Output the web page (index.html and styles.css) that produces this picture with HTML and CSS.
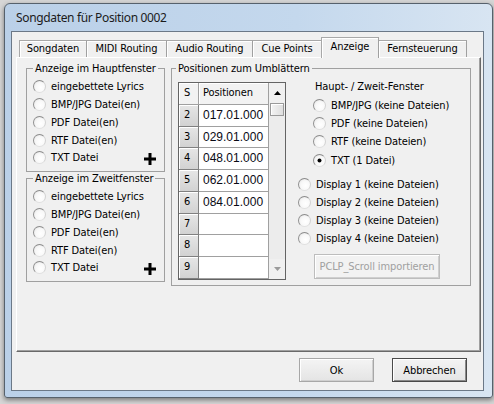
FILE: index.html
```html
<!DOCTYPE html>
<html>
<head>
<meta charset="utf-8">
<link rel="stylesheet" href="styles.css">
</head>
<body>
<div class="window">
  <div class="titlebar">Songdaten für Position 0002</div>
  <div class="client">
    <div class="tabrow">
      <div class="tab first w1">Songdaten</div>
      <div class="tab w2">MIDI Routing</div>
      <div class="tab w3">Audio Routing</div>
      <div class="tab w4">Cue Points</div>
      <div class="tab active w5">Anzeige</div>
      <div class="tab w6">Fernsteuerung</div>
    </div>
    <div class="panel">
      <div class="leftcol">
        <fieldset class="group small">
          <legend>Anzeige im Hauptfenster</legend>
          <div class="radio"><span class="r"></span>eingebettete Lyrics</div>
          <div class="radio"><span class="r"></span>BMP/JPG Datei(en)</div>
          <div class="radio"><span class="r"></span>PDF Datei(en)</div>
          <div class="radio"><span class="r"></span>RTF Datei(en)</div>
          <div class="radio"><span class="r"></span>TXT Datei<svg class="plus" width="12" height="12" viewBox="0 0 12 12"><path d="M4.5 0h3v4.5h4.5v3h-4.5v4.5h-3v-4.5h-4.5v-3h4.5z"/></svg></div>
        </fieldset>
        <fieldset class="group small second">
          <legend>Anzeige im Zweitfenster</legend>
          <div class="radio"><span class="r"></span>eingebettete Lyrics</div>
          <div class="radio"><span class="r"></span>BMP/JPG Datei(en)</div>
          <div class="radio"><span class="r"></span>PDF Datei(en)</div>
          <div class="radio"><span class="r"></span>RTF Datei(en)</div>
          <div class="radio"><span class="r"></span>TXT Datei<svg class="plus" width="12" height="12" viewBox="0 0 12 12"><path d="M4.5 0h3v4.5h4.5v3h-4.5v4.5h-3v-4.5h-4.5v-3h4.5z"/></svg></div>
        </fieldset>
      </div>
      <fieldset class="group pos">
        <legend>Positionen zum Umblättern</legend>
        <div class="posbody">
          <div class="grid">
            <div class="cells">
              <div class="hd">S</div><div class="hd">Positionen</div>
              <div class="rh">2</div><div class="dc">017.01.000</div>
              <div class="rh">3</div><div class="dc">029.01.000</div>
              <div class="rh">4</div><div class="dc">048.01.000</div>
              <div class="rh">5</div><div class="dc">062.01.000</div>
              <div class="rh">6</div><div class="dc">084.01.000</div>
              <div class="rh">7</div><div class="dc"></div>
              <div class="rh">8</div><div class="dc"></div>
              <div class="rh">9</div><div class="dc"></div>
            </div>
            <div class="vscroll">
              <div class="sbtn"><svg width="7" height="4" viewBox="0 0 7 4"><path d="M3.5 0L7 4H0z" fill="#000"/></svg></div>
              <div class="thumb"></div>
              <div class="track"></div>
              <div class="sbtn"><svg width="7" height="4" viewBox="0 0 7 4"><path d="M0 0h7L3.5 4z" fill="#9a9a9a"/></svg></div>
            </div>
          </div>
          <div class="posright">
            <div class="lbl">Haupt- / Zweit-Fenster</div>
            <div class="sub">
              <div class="radio"><span class="r"></span>BMP/JPG (keine Dateien)</div>
              <div class="radio"><span class="r"></span>PDF (keine Dateien)</div>
              <div class="radio"><span class="r"></span>RTF (keine Dateien)</div>
              <div class="radio"><span class="r on"></span>TXT (1 Datei)</div>
            </div>
            <div class="disp">
              <div class="radio"><span class="r"></span>Display 1 (keine Dateien)</div>
              <div class="radio"><span class="r"></span>Display 2 (keine Dateien)</div>
              <div class="radio"><span class="r"></span>Display 3 (keine Dateien)</div>
              <div class="radio"><span class="r"></span>Display 4 (keine Dateien)</div>
            </div>
            <button class="btn import" disabled>PCLP_Scroll importieren</button>
          </div>
        </div>
      </fieldset>
    </div>
    <div class="footer">
      <button class="btn">Ok</button>
      <button class="btn default">Abbrechen</button>
    </div>
  </div>
</div>
</body>
</html>
```
FILE: styles.css
```css
* { box-sizing: border-box; }
html, body { margin: 0; }
body {
  width: 494px; height: 404px; overflow: hidden;
  background: #d6d6d6;
  font-family: "DejaVu Sans Condensed", "DejaVu Sans", sans-serif;
  font-stretch: condensed;
  font-size: 11px; color: #000;
  letter-spacing: -0.1px;
}
.window {
  margin: 3px 0 0 4px;
  width: 489px; height: 395px;
  border: 1px solid #56616c;
  border-radius: 6px 6px 3px 3px;
  background: linear-gradient(to right, #bad0e8 0%, #c4d8ed 60%, #d8e5f2 100%);
  padding: 0 8px 6px 6px;
  box-shadow: 0 2px 5px rgba(0,0,0,.45);
}
.titlebar {
  height: 27px; line-height: 28px; padding-left: 5px;
  font-family: "Noto Sans", "Open Sans", sans-serif; font-stretch: normal;
  font-size: 12px; color: #1b1b1b; letter-spacing: -0.35px;
}
.client {
  height: 360px;
  border: 1px solid #6b7887;
  background: #f0f0f0;
  padding: 5px 0 0 4px;
}
.tabrow {
  display: flex; align-items: flex-end;
  height: 20px; padding-left: 3px;
  position: relative; z-index: 1;
}
.tab {
  height: 17px; line-height: 15px; text-align: center;
  border-top: 1px solid #a8a8a8; border-right: 1px solid #a0a0a0;
  box-shadow: inset 1px 1px #fff;
  background: #f0f0f0;
  white-space: nowrap;
}
.tab.first { border-left: 1px solid #a8a8a8; }
.tab.active {
  height: 21px; line-height: 17px; margin-bottom: -1px;
  border-left: 1px solid #a8a8a8;
}
.w1 { width: 68px; } .w2 { width: 80px; } .w3 { width: 86px; }
.w4 { width: 69px; } .w5 { width: 58px; margin-left: -1px; } .w6 { width: 88px; }
.panel {
  width: 465px; height: 295px;
  border: 1px solid; border-color: #fff #696969 #696969 #fff;
  box-shadow: inset -1px -1px #a0a0a0;
  display: flex; gap: 6px;
  padding: 4px 0 0 9px;
}
.leftcol { width: 139px; display: flex; flex-direction: column; }
fieldset.group {
  margin: 0; min-width: 0;
  border: 1px solid #a0a0a0;
  padding: 3px 0 0 6px;
}
fieldset.group legend {
  padding: 0 2px; line-height: 13px; font-size: 11px;
}
.small { height: 110px; }
.second { margin-top: 4px; }
.radio { display: flex; align-items: center; height: 17.75px; white-space: nowrap; }
.r {
  flex: none;
  width: 13px; height: 13px; margin-right: 5px;
  border-radius: 50%;
  border: 1px solid; border-color: #8a8a8a #d2d2d2 #e0e0e0 #8f8f8f;
  background: radial-gradient(circle at 60% 60%, #ffffff 0%, #f8f8f8 50%, #e2e2e2 100%);
  position: relative;
}
.r.on::after {
  content: ""; position: absolute; left: 4px; top: 4px;
  width: 3px; height: 3px; border-radius: 50%; background: #000;
  box-shadow: 0 0 0 0.5px #000;
}
.plus { margin-left: auto; margin-right: 8px; margin-top: 2px; }
.pos { width: 300px; height: 224px; padding: 1px 0 0 9px; }
.pos legend { margin-left: -2px; }
.posbody { display: flex; gap: 12px; }
.grid {
  margin-top: 4px;
  width: 108px; height: 198px;
  border: 1px solid #646464;
  display: flex;
}
.cells {
  display: grid;
  grid-template-columns: 20px 70px;
  grid-template-rows: repeat(9, 1fr);
  height: 196px;
}
.cells > div {
  border-right: 1px solid #a0a0a0; border-bottom: 1px solid #a0a0a0;
  line-height: 20px; white-space: nowrap; overflow: hidden;
}
.hd { background: #f2f2f2; padding-left: 4px; box-shadow: inset 1px 1px #fff; }
.cells > .hd:first-child { padding-left: 5px; }
.rh {
  padding-left: 5px;
  background: linear-gradient(#e6e6e6, #d2d2d2);
  box-shadow: inset 1px 1px #fff;
  border-right-color: #808080 !important; border-bottom-color: #808080 !important;
}
.dc {
  background: #fff; padding-left: 4px;
  font-family: "Liberation Sans", Arial, sans-serif; font-stretch: normal;
  font-size: 12px; color: #0a0a14; letter-spacing: 0;
}
.vscroll {
  width: 16px; height: 196px;
  display: flex; flex-direction: column;
  background: #f0f0f0;
}
.sbtn { height: 20px; display: flex; align-items: center; justify-content: center; flex: none; }
.thumb {
  height: 13px; margin: 0 1px; flex: none;
  border: 1px solid #9a9a9a;
  background: linear-gradient(to right, #f4f4f4, #dedede);
  box-shadow: inset 1px 1px #fff;
}
.track { flex: 1; background: #ececec; }
.posright { width: 158px; }
.lbl { height: 18px; line-height: 18px; padding-left: 17px; white-space: nowrap; }
.sub { padding-left: 15px; }
.sub .radio { height: 18.3px; }
.disp { margin-top: 6.6px; }
.disp .radio { height: 17.8px; }
.btn {
  font-family: inherit; font-stretch: condensed; font-size: 11px; color: #000;
  letter-spacing: -0.1px;
  width: 75px; height: 24px; padding: 0;
  border: 1px solid #a7a7a7;
  border-radius: 0;
  background: linear-gradient(#f4f4f4, #e4e4e4);
  box-shadow: inset 1px 1px #fff, inset -1px -1px #cfcfcf;
}
.btn.import {
  width: 126px; height: 25px; margin: 7px 0 0 16px;
  color: #a0a0a0; border-color: #bdbdbd;
  background: #f2f2f2;
}
.btn.default {
  border-color: #4a4a4a;
  box-shadow: inset 1px 1px #fff, inset -1px -1px #8a8a8a;
}
.footer {
  display: flex; justify-content: flex-end; gap: 18px;
  padding: 6px 16px 0 0;
}
```
